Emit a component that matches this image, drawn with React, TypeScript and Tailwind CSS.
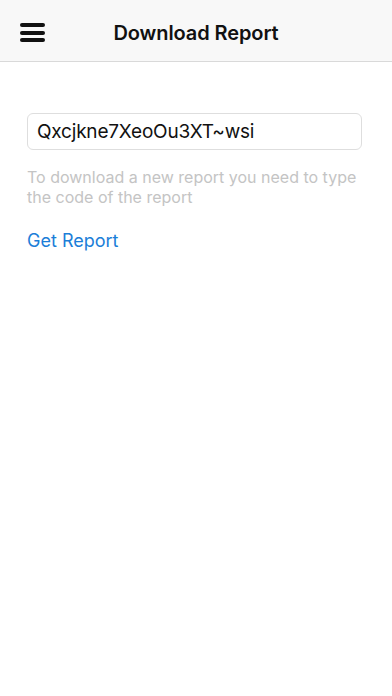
import React, { useState } from "react";

const App: React.FC = () => {
  const [code, setCode] = useState("Qxcjkne7XeoOu3XT~wsi");

  return (
    <div className="w-[392px] h-[696px] bg-white flex flex-col font-['Inter','Liberation_Sans',sans-serif]">
      <header className="relative h-[62px] bg-[#f8f8f8] border-b border-[#d9d9d9] flex items-center justify-center pt-[4px] shrink-0">
        <button className="absolute left-[20px] top-[23px] w-[25px] h-[19px] flex flex-col justify-between">
          <span className="block h-[4px] w-full rounded-full bg-[#111]"></span>
          <span className="block h-[4px] w-full rounded-full bg-[#111]"></span>
          <span className="block h-[4px] w-full rounded-full bg-[#111]"></span>
        </button>
        <h1 className="text-[20px] font-semibold text-[#111] tracking-[-0.1px]">Download Report</h1>
      </header>

      <main className="px-[27px] pt-[51px] flex flex-col">
        <input
          type="text"
          value={code}
          onChange={(e) => setCode(e.target.value)}
          className="w-[335px] h-[37px] rounded-[6px] border border-[#dedede] px-[9px] text-[19px] tracking-[-0.2px] text-[#111] outline-none"
        />
        <p className="mt-[17px] text-[16px] leading-[20px] text-[#c4c4c4] pr-[8px]">
          To download a new report you need to type the code of the report
        </p>
        <button className="mt-[20px] self-start text-[18px] text-[#1b7ed8]">Get Report</button>
      </main>
    </div>
  );
};

export default App;
